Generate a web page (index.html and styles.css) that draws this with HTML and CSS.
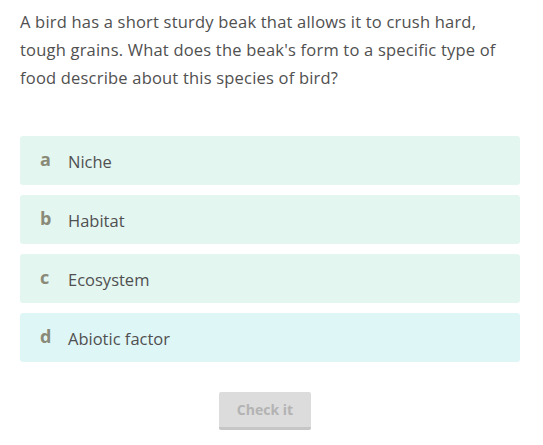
FILE: index.html
```html
<!DOCTYPE html>
<html>
<head>
<meta charset="utf-8">
<link rel="stylesheet" href="styles.css">
</head>
<body>
<div class="quiz">
  <p class="question">A bird has a short sturdy beak that allows it to crush hard, tough grains. What does the beak's form to a specific type of food describe about this species of bird?</p>
  <ul class="options">
    <li class="option"><span class="letter">a</span><span class="label">Niche</span></li>
    <li class="option"><span class="letter">b</span><span class="label">Habitat</span></li>
    <li class="option"><span class="letter">c</span><span class="label">Ecosystem</span></li>
    <li class="option option-alt"><span class="letter">d</span><span class="label">Abiotic factor</span></li>
  </ul>
  <div class="actions">
    <button class="check" disabled>Check it</button>
  </div>
</div>
</body>
</html>
```
FILE: styles.css
```css
html, body {
  margin: 0;
  padding: 0;
  background: #ffffff;
}
body {
  font-family: "Open Sans", "Noto Sans", sans-serif;
  color: #505050;
}
.quiz {
  padding: 8px 23px 0 20px;
}
.question {
  margin: 0;
  font-size: 16.5px;
  line-height: 28px;
  letter-spacing: 0.2px;
  color: #505050;
}
.options {
  list-style: none;
  margin: 44px 0 0 0;
  padding: 0;
  display: flex;
  flex-direction: column;
  gap: 10px;
}
.option {
  display: flex;
  align-items: center;
  height: 49px;
  background: #e3f6f0;
  border-radius: 3px;
  padding-left: 20px;
}
.option-alt {
  background: #dff6f7;
}
.letter {
  width: 28px;
  font-weight: 700;
  font-size: 18px;
  color: #8a8a78;
  margin-top: -4px;
}
.label {
  font-size: 16.5px;
  color: #505050;
  margin-top: 1px;
}
.actions {
  display: flex;
  justify-content: center;
  margin-top: 30px;
  padding-right: 10px;
}
.check {
  width: 92px;
  height: 38px;
  background: #dcdcdc;
  border: none;
  border-bottom: 3px solid #c6c6c6;
  border-radius: 2px;
  font-family: "Open Sans", "Noto Sans", sans-serif;
  font-weight: 700;
  font-size: 14px;
  color: #b3b3b3;
  padding: 0;
}
```
